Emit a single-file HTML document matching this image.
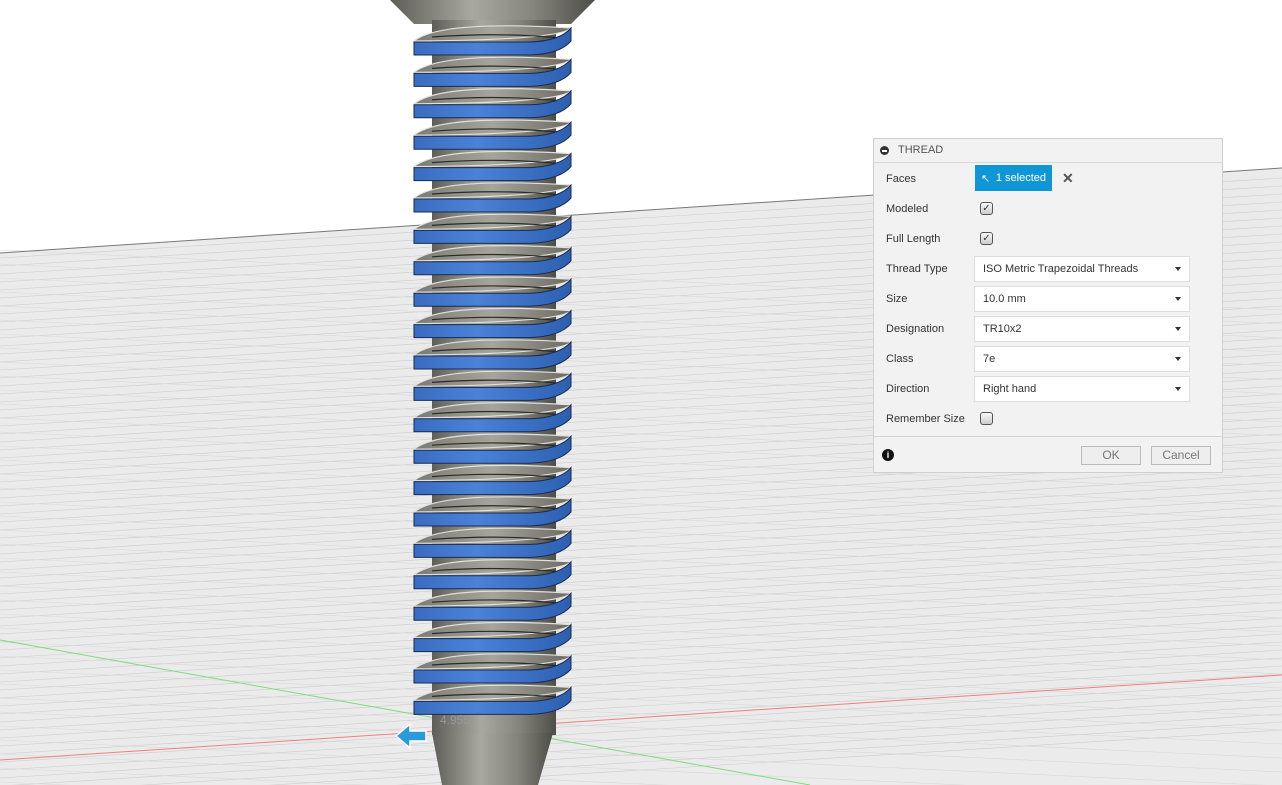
<!DOCTYPE html>
<html style="overflow:hidden;width:1282px;height:785px"><head><meta charset="utf-8"><style>
body{margin:0;width:1282px;height:785px;overflow:hidden;background:#fff;font-family:"Liberation Sans",Arial,sans-serif;position:relative}
svg{position:absolute;left:0;top:0;display:block}
.panel{position:absolute;left:873px;top:138px;width:348px;height:333px;background:#f2f2f2;border:1px solid #cfcfcf;font-size:11px;color:#333}
.hdr{height:23px;border-bottom:1px solid #d8d8d8;line-height:23px;padding-left:24px;color:#555;position:relative}
.hdr:before{content:"";position:absolute;left:6px;top:7px;width:9px;height:9px;border-radius:50%;background:#333}
.hdr:after{content:"";position:absolute;left:8px;top:11px;width:5px;height:1.5px;background:#fff}
.lbl{position:absolute;left:12px}
.dd{position:absolute;left:100px;height:26px;background:#fff;border:1px solid #ddd;line-height:24px;padding-left:8px;box-sizing:border-box;width:216px}
.dd:after{content:"";position:absolute;right:8px;top:10px;border-left:3px solid transparent;border-right:3px solid transparent;border-top:4px solid #333}
.cb{position:absolute;left:106px;width:11px;height:11px;border:1px solid #555;border-radius:3px;background:linear-gradient(#fafafa,#ccc);font-size:10px;line-height:11px;text-align:center}
.btn{position:absolute;top:307px;height:17px;border:1px solid #bbb;background:#eee;color:#777;font-size:12px;text-align:center;line-height:17px}
</style></head><body>
<svg width="1282" height="785" id="s">
<polygon points="0,253 1282,168 1282,785 0,785" fill="#ebebeb"/>
<g id="grid" stroke="#cdcdcd" stroke-width="0.6"></g>
<line x1="0" y1="253" x2="1282" y2="168" stroke="#777" stroke-width="1"/>
<line x1="0" y1="760" x2="1282" y2="675" stroke="#f08080" stroke-width="1"/>
<line x1="0" y1="640" x2="810" y2="785" stroke="#7ddc7d" stroke-width="1"/>
<defs>
<linearGradient id="cyl" x1="0" x2="1"><stop offset="0" stop-color="#5e5e58"/><stop offset=".4" stop-color="#a8a8a0"/><stop offset=".7" stop-color="#85857e"/><stop offset="1" stop-color="#4e4e48"/></linearGradient>
<linearGradient id="blue" x1="0" x2="1"><stop offset="0" stop-color="#3a6cc0"/><stop offset=".4" stop-color="#4a82d8"/><stop offset="1" stop-color="#2d5fb0"/></linearGradient>
<linearGradient id="top" x1="0" x2="1"><stop offset="0" stop-color="#7a7a74"/><stop offset=".5" stop-color="#a5a59d"/><stop offset="1" stop-color="#6d6a62"/></linearGradient>
</defs>
<polygon points="390,0 595,0 571,24 414,24" fill="url(#cyl)"/>
<rect x="432" y="20" width="124" height="715" fill="url(#cyl)"/>
<polygon points="432,733 553,733 538,785 442,785" fill="url(#cyl)"/>
<g id="thr"></g>
<polygon points="396,736 410,724 410,731 426,731 426,741 410,741 410,748" fill="#2a9ad8" stroke="#fff" stroke-width="1.5"/>
<text x="440" y="724" font-size="12" fill="#999">4.955</text>
</svg>
<script>
var g=document.getElementById('grid'),h='';
for(var i=0;i<70;i++){var y=258+i*8;h+='<line x1="0" y1="'+y+'" x2="1282" y2="'+(y-80)+'"/>';}
for(var i=0;i<40;i++){var y=250+i*14;h+='<line x1="0" y1="'+y+'" x2="1282" y2="'+(y+60)+'" stroke="#d8d8d8"/>';}
g.innerHTML=h;
var t=document.getElementById('thr'),s='';
for(var k=0;k<22;k++){var y=42+k*31.4;
s+='<path d="M414,'+(y-1)+' Q440,'+(y-22)+' 571,'+(y-14)+' Q560,'+(y-2)+' 414,'+(y-1)+'Z" fill="url(#top)" stroke="#e0e0dc" stroke-width="1.2"/>';
s+='<path d="M432,'+(y-5)+' Q500,'+(y-10)+' 560,'+(y-4)+'" fill="none" stroke="#2a2a26" stroke-width="1.2"/>';
s+='<path d="M414,'+y+' L530,'+y+' Q560,'+(y-1)+' 571,'+(y-14)+' L571,'+(y-1)+' Q560,'+(y+12)+' 530,'+(y+13)+' L414,'+(y+13)+'Z" fill="url(#blue)" stroke="#1a2a50" stroke-width="1"/>';}
t.innerHTML=s;
</script>
<div class="panel">
<div class="hdr">THREAD</div>
<div class="lbl" style="top:34px">Faces</div>
<div style="position:absolute;left:101px;top:26px;width:77px;height:26px;background:#0e96d6;color:#fff;line-height:26px;text-align:right;padding-right:6px;box-sizing:border-box">1 selected</div>
<div style="position:absolute;left:107px;top:33px;color:#fff;font-size:11px">&#x2196;</div>
<div style="position:absolute;left:188px;top:31px;font-size:14px;color:#555;font-weight:bold">✕</div>
<div class="lbl" style="top:64px">Modeled</div><div class="cb" style="top:63px">✓</div>
<div class="lbl" style="top:94px">Full Length</div><div class="cb" style="top:93px">✓</div>
<div class="lbl" style="top:124px">Thread Type</div><div class="dd" style="top:117px">ISO Metric Trapezoidal Threads</div>
<div class="lbl" style="top:154px">Size</div><div class="dd" style="top:147px">10.0 mm</div>
<div class="lbl" style="top:184px">Designation</div><div class="dd" style="top:177px">TR10x2</div>
<div class="lbl" style="top:214px">Class</div><div class="dd" style="top:207px">7e</div>
<div class="lbl" style="top:244px">Direction</div><div class="dd" style="top:237px">Right hand</div>
<div class="lbl" style="top:274px">Remember Size</div><div class="cb" style="top:273px"></div>
<div style="position:absolute;left:0;top:297px;width:100%;border-top:1px solid #d4d4d4"></div>
<div style="position:absolute;left:8px;top:310px;width:12px;height:12px;border-radius:50%;background:#111;color:#fff;font-size:9px;font-weight:bold;text-align:center;line-height:12px">i</div>
<div class="btn" style="left:207px;width:58px">OK</div>
<div class="btn" style="left:277px;width:58px">Cancel</div>
</div>
</body></html>
